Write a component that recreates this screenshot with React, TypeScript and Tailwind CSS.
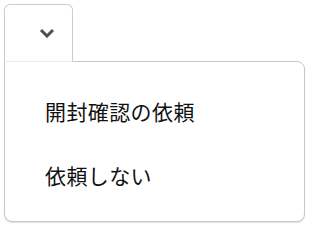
const App = () => {
  return (
    <div
      className="w-[310px] h-[230px] bg-white pl-1 pt-1"
      style={{ fontFamily: '"Noto Sans CJK JP", "Noto Sans", sans-serif' }}
    >
      {/* Tab */}
      <div className="relative z-10 -mb-px flex h-[58px] w-[69px] items-center justify-center rounded-t-[6px] border border-[#cccccc] border-b-[#ececec] bg-white pl-[16px]">
        <svg width="16" height="10" viewBox="0 0 16 10" fill="none">
          <path d="M2 2 L8 8 L14 2" stroke="#505050" strokeWidth="3" />
        </svg>
      </div>

      {/* Panel */}
      <div className="w-[301px] h-[161px] rounded-lg rounded-tl-none border border-[#c8c8c8] bg-white pt-[18px] shadow-[0_1px_1px_rgba(0,0,0,0.12)]">
        <div className="flex h-[64px] items-center pl-[40px] text-[21px] tracking-[0.4px] text-[#111]">
          開封確認の依頼
        </div>
        <div className="flex h-[64px] items-center pl-[40px] text-[21px] tracking-[0.4px] text-[#111]">
          依頼しない
        </div>
      </div>
    </div>
  );
};

export default App;
